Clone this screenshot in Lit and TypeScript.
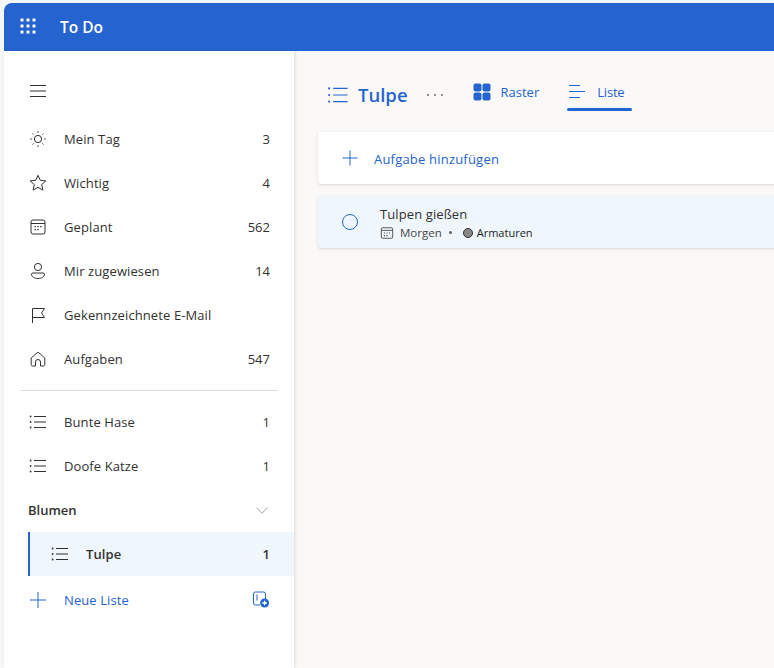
import { LitElement, html, css, svg } from 'lit';
import { customElement } from 'lit/decorators.js';

const icon = (body: unknown, size = 20, vb = 20) =>
  html`<svg width=${size} height=${size} viewBox="0 0 ${vb} ${vb}" fill="none" stroke="currentColor" stroke-width="1">${body}</svg>`;

const listGlyph = svg`
  <path d="M6 4.500h12M6 10h12M6 15.500h12"/>
  <circle cx="2.600" cy="4.500" r=".9" fill="currentColor" stroke="none"/>
  <circle cx="2.600" cy="10" r=".9" fill="currentColor" stroke="none"/>
  <circle cx="2.600" cy="15.500" r=".9" fill="currentColor" stroke="none"/>`;

const sun = svg`
  <circle cx="10" cy="10" r="3.600"/>
  <path d="M10 2.200v1.600M10 16.200v1.600M2.200 10h1.600M16.200 10h1.600M4.500 4.500l1.100 1.100M14.400 14.400l1.100 1.100M4.500 15.500l1.100-1.100M14.400 5.600l1.100-1.100"/>`;
const star = svg`<path d="M10 2.300l2.300 5 5.500.6-4.100 3.700 1.200 5.500-4.900-2.800-4.900 2.800 1.200-5.500-4.100-3.700 5.500-.6z" stroke-linejoin="round"/>`;
const calendar = svg`
  <rect x="3" y="3" width="14" height="14" rx="2"/>
  <path d="M3 6.500h14"/>
  <path d="M6.500 9.600h1.400M9.300 9.600h1.400M12.100 9.600h1.400M6.500 12.600h1.400M9.300 12.600h1.400" stroke-width="1.400"/>`;
const person = svg`
  <circle cx="10" cy="6" r="3.600"/>
  <path d="M3.500 13.200c0-.7.6-1.200 1.300-1.200h10.400c.7 0 1.300.5 1.300 1.200 0 2.600-2.900 4.300-6.500 4.300s-6.500-1.700-6.500-4.300z"/>`;
const flag = svg`<path d="M4.500 18V3.500h12l-3 4.500 3 4.500h-12" stroke-linejoin="round"/>`;
const home = svg`
  <path d="M3.200 9l6-5.300a1.200 1.200 0 0 1 1.600 0l6 5.300v6.500a1.500 1.500 0 0 1-1.500 1.500h-2.800v-4a2.500 2.500 0 0 0-5 0v4H4.700a1.500 1.500 0 0 1-1.500-1.500z" stroke-linejoin="round"/>`;
const plus = svg`<path d="M10 2v16M2 10h16"/>`;

const smart = [
  { name: 'Mein Tag', count: '3', glyph: sun },
  { name: 'Wichtig', count: '4', glyph: star },
  { name: 'Geplant', count: '562', glyph: calendar },
  { name: 'Mir zugewiesen', count: '14', glyph: person },
  { name: 'Gekennzeichnete E-Mail', count: '', glyph: flag },
  { name: 'Aufgaben', count: '547', glyph: home },
];
const lists = [
  { name: 'Bunte Hase', count: '1', glyph: listGlyph },
  { name: 'Doofe Katze', count: '1', glyph: listGlyph },
];

@customElement('app-root')
export class AppRoot extends LitElement {
  static styles = css`
    :host {
      display: flex;
      flex-direction: column;
      height: 668px;
      overflow: hidden;
      box-sizing: border-box;
      padding: 3px 0 0 4px;
      background: #f6f6f6;
      font-family: 'Open Sans', 'Noto Sans', sans-serif;
      font-size: 13px;
      color: #323130;
    }
    svg {
      display: block;
      flex: none;
    }
    .topbar {
      flex: none;
      height: 48px;
      display: flex;
      align-items: center;
      background: #2564cf;
      color: #fff;
      border-radius: 8px 0 0 0;
    }
    .waffle {
      width: 48px;
      display: flex;
      justify-content: center;
      margin-top: -2px;
    }
    .brand {
      margin-left: 8px;
      font-size: 15.5px;
      font-weight: 600;
    }
    .body {
      flex: 1;
      display: flex;
      min-height: 0;
    }
    .sidebar {
      flex: none;
      width: 290px;
      background: #fff;
      padding-top: 18px;
      box-shadow: 1px 0 3px rgba(0, 0, 0, 0.12);
      position: relative;
    }
    .menu {
      height: 44px;
      padding-left: 24px;
      display: flex;
      align-items: center;
      margin-bottom: 4px;
    }
    .row {
      height: 44px;
      display: flex;
      align-items: center;
      padding: 0 24px 0 24px;
    }
    .row .ico {
      width: 20px;
      margin-right: 16px;
      color: #323130;
    }
    .row .name {
      flex: 1;
      white-space: nowrap;
      letter-spacing: 0.1px;
    }
    .divider {
      height: 1px;
      background: #e1dfdd;
      margin: 9px 16px 9px 16px;
    }
    .group {
      height: 44px;
      display: flex;
      align-items: center;
      justify-content: space-between;
      padding: 0 24px;
      font-weight: 600;
      color: #323130;
    }
    .group svg {
      color: #8a8886;
    }
    .row.selected {
      margin-left: 24px;
      padding-left: 20px;
      padding-right: 24px;
      background: #eff6fc;
      border-left: 2px solid #2564cf;
      font-weight: 600;
    }
    .row.add {
      margin-top: 2px;
      color: #2564cf;
    }
    .row.add .ico {
      color: #2564cf;
    }
    .main {
      flex: 1;
      min-width: 0;
      background: #faf9f8;
      padding: 0 0 0 24px;
    }
    .toolbar {
      height: 81px;
      display: flex;
      align-items: flex-start;
      color: #2564cf;
    }
    .title {
      display: flex;
      align-items: center;
      margin: 30px 0 0 8px;
    }
    .title h1 {
      margin: 0 0 0 8px;
      font-size: 18.5px;
      line-height: 28px;
      font-weight: 600;
    }
    .more {
      margin: 0 28px 0 18px;
      color: #605e5c;
    }
    .tab {
      height: 52px;
      margin-top: 15px;
      display: flex;
      align-items: center;
      box-sizing: border-box;
      position: relative;
    }
    .tab span {
      margin-left: 9px;
    }
    .tab.active {
      margin-left: 28px;
      padding: 0 8px 0 1px;
    }
    .tab.active span {
      letter-spacing: -0.2px;
    }
    .tab.active::after {
      content: '';
      position: absolute;
      left: 0;
      right: 0;
      bottom: 7px;
      height: 3px;
      border-radius: 2px;
      background: #2564cf;
    }
    .card {
      height: 52px;
      margin-right: -8px;
      display: flex;
      align-items: center;
      padding-left: 22px;
      border-radius: 4px;
      box-shadow: 0 1px 3px rgba(0, 0, 0, 0.14);
    }
    .card.new {
      background: #fff;
      color: #2564cf;
    }
    .card.new span {
      margin-left: 14px;
      padding-top: 1px;
      letter-spacing: 0.2px;
    }
    .card.task {
      margin-top: 12px;
      padding-left: 24px;
      background: #eff6fc;
    }
    .circle {
      flex: none;
      box-sizing: border-box;
      width: 16px;
      height: 16px;
      border: 1.3px solid #2564cf;
      border-radius: 50%;
    }
    .task-body {
      margin-left: 22px;
      padding-top: 2px;
    }
    .task-title {
      line-height: 18px;
      letter-spacing: 0.1px;
    }
    .meta {
      display: flex;
      align-items: center;
      height: 17px;
      margin-top: 1px;
      font-size: 11px;
      color: #484644;
    }
    .meta .when {
      margin-left: 6px;
      font-size: 11.5px;
    }
    .meta .dot {
      width: 3px;
      height: 3px;
      border-radius: 50%;
      background: #605e5c;
      margin: 0 10.5px 0 7.5px;
    }
    .meta .swatch {
      width: 8px;
      height: 8px;
      border: 1px solid #323130;
      border-radius: 50%;
      background: #8a8886;
      margin-right: 4px;
    }
    .meta .tag {
      color: #201f1e;
    }
  `;

  private renderRow(r: { name: string; count: string; glyph: unknown }) {
    return html`<div class="row">
      <div class="ico">${icon(r.glyph)}</div>
      <div class="name">${r.name}</div>
      <div class="count">${r.count}</div>
    </div>`;
  }

  render() {
    const dots = [0, 1, 2].flatMap((y) => [0, 1, 2].map((x) => [3 + x * 6, 3 + y * 6]));
    return html`
      <div class="topbar">
        <div class="waffle">
          <svg width="18" height="18" viewBox="0 0 18 18">
            ${dots.map(([x, y]) => svg`<rect x=${x - 1.5} y=${y - 1.5} width="3" height="3" rx=".6" fill="#fff"/>`)}
          </svg>
        </div>
        <div class="brand">To Do</div>
      </div>
      <div class="body">
        <nav class="sidebar">
          <div class="menu">${icon(svg`<path d="M2 4.500h16M2 10h16M2 15.500h16"/>`)}</div>
          ${smart.map((r) => this.renderRow(r))}
          <div class="divider"></div>
          ${lists.map((r) => this.renderRow(r))}
          <div class="group">
            <span>Blumen</span>
            ${icon(svg`<path d="M3 7l7 7 7-7"/>`, 16, 20)}
          </div>
          <div class="row selected">
            <div class="ico">${icon(listGlyph)}</div>
            <div class="name">Tulpe</div>
            <div class="count">1</div>
          </div>
          <div class="row add">
            <div class="ico">${icon(plus)}</div>
            <div class="name">Neue Liste</div>
            ${icon(svg`
              <path d="M8 14H3.500a2 2 0 0 1-2-2V3a2 2 0 0 1 2-2h8a2 2 0 0 1 2 2v5"/>
              <path d="M5 3.500v6"/>
              <circle cx="12.600" cy="12" r="4.500" fill="currentColor" stroke="none"/>
              <path d="M12.600 9.700v4.600M10.300 12h4.600" stroke="#fff" stroke-width="1.300"/>`, 18, 18)}
          </div>
        </nav>
        <main class="main">
          <div class="toolbar">
            <div class="title">
              ${icon(listGlyph, 24)}
              <h1>Tulpe</h1>
              <div class="more">
                ${icon(svg`
                  <circle cx="2" cy="9" r=".9" fill="currentColor" stroke="none"/>
                  <circle cx="9" cy="9" r=".9" fill="currentColor" stroke="none"/>
                  <circle cx="16" cy="9" r=".9" fill="currentColor" stroke="none"/>`, 18, 18)}
              </div>
            </div>
            <div class="tab">
              <svg width="20" height="20" viewBox="0 0 20 20" fill="currentColor">
                <rect x="1.500" y="1.500" width="8" height="8" rx="2"/>
                <rect x="10.500" y="1.500" width="8" height="8" rx="2"/>
                <rect x="1.500" y="10.500" width="8" height="8" rx="2"/>
                <rect x="10.500" y="10.500" width="8" height="8" rx="2"/>
              </svg>
              <span>Raster</span>
            </div>
            <div class="tab active">
              ${icon(svg`<path d="M1 3.500h11M1 9.500h16M1 15.500h11"/>`)}
              <span>Liste</span>
            </div>
          </div>
          <div class="card new">
            ${icon(svg`<path d="M10 2.500v15M2.500 10h15"/>`)}
            <span>Aufgabe hinzufügen</span>
          </div>
          <div class="card task">
            <div class="circle"></div>
            <div class="task-body">
              <div class="task-title">Tulpen gießen</div>
              <div class="meta">
                ${icon(svg`
                  <rect x="1.500" y="2" width="13" height="12" rx="1.500"/>
                  <path d="M1.500 5h13"/>
                  <path d="M4.500 8h1.200M7.400 8h1.200M10.300 8h1.200M4.500 11h1.200M7.400 11h1.200" stroke-width="1.200"/>`, 14, 16)}
                <span class="when">Morgen</span>
                <span class="dot"></span>
                <span class="swatch"></span>
                <span class="tag">Armaturen</span>
              </div>
            </div>
          </div>
        </main>
      </div>
    `;
  }
}
